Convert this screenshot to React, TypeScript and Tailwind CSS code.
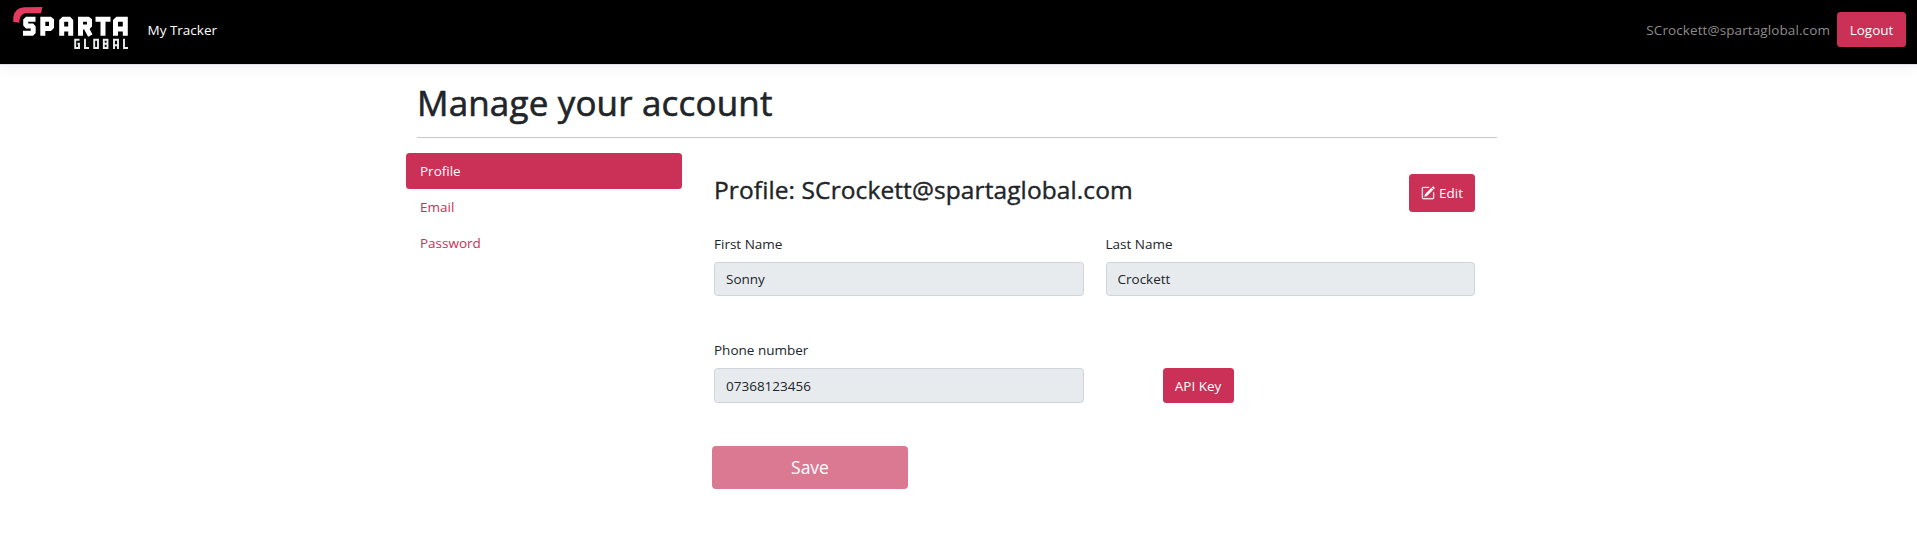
import React from "react";

function Logo() {
  return (
    <svg width="118" height="46" viewBox="12 6 118 46" className="block shrink-0" fill="none" aria-label="Sparta Global">
      <path d="M13.300 22V17Q14 8.500 24 7.200L42.500 7L41 13.200H25.500Q19.500 14 19.300 22.700Z" fill="#e5395f" />
      <g stroke="#fff" strokeWidth="5" strokeLinejoin="miter">
        <path d="M35.500 19.200H27L25.700 20.500V24.500L27 26H32L33.200 27.500V31.900L32 33.200H23" />
        <path d="M42.800 35.700V19.200H50L51.500 20.500V27L50 28.400H43" />
        <path d="M61.700 35.700V21L63.500 19.200H69L70.700 21V35.700M62 29H71" />
        <path d="M80.500 35.700V19.200H88L89.500 20.500V25.500L88 27H81M86 27.500L90.300 35.700" />
        <path d="M95.500 19.200H110.500M103 19V35.700" />
        <path d="M115.500 35.700V21L117.300 19.200H125.300V35.700M115.500 29H125" />
      </g>
      <g stroke="#e8eeee" strokeWidth="1.900">
        <path d="M79.500 39.800H75.200V48H79V43.800H77.500" />
        <path d="M85 38.700V48H89" />
        <path d="M94.200 39.800H98V48H94.200Z" />
        <path d="M103.800 39.800H107.500V48H103.800ZM103.800 43.700H108" />
        <path d="M114 49V39.800H118V49M114 45.200H118" />
        <path d="M124 38.700V48H128" />
      </g>
    </svg>
  );
}

function Field({ label, value, heightClass }: { label: string; value: string; heightClass: string }) {
  return (
    <div className="min-w-0">
      <label className="block h-[21px] leading-[21px]">{label}</label>
      <div
        className={
          "mt-[7px] flex items-center rounded-[3.5px] border border-[#ced4da] bg-[#e7ebee] px-[11px] pt-px " + heightClass
        }
      >
        {value}
      </div>
    </div>
  );
}

const navItems = ["Profile", "Email", "Password"];

export default function App() {
  return (
    <div className="h-[542px] w-full overflow-hidden bg-white font-['Open_Sans','Noto_Sans',sans-serif] text-[13.5px] text-[#212529]">
      <header className="flex h-[65px] items-start border-b border-[#dee2e6] bg-black pr-[11px] pl-3 text-white shadow-[0_4px_12px_rgba(0,0,0,0.05)]">
        <div className="pt-1.5">
          <Logo />
        </div>
        <nav className="flex h-[59px] flex-1 items-center justify-between pl-[17.5px]">
          <span className="pt-0.5">My Tracker</span>
          <div className="flex items-center">
            <span className="pt-0.5 tracking-[0.1px] text-[#8c8c8c]">SCrockett@spartaglobal.com</span>
            <button className="ml-[7px] h-[35px] w-[69px] rounded-[3.5px] bg-[#cb3057] pt-px text-white">Logout</button>
          </div>
        </nav>
      </header>

      <main className="ml-[417px] w-[1080px]">
        <h1 className="pt-[17px] text-[35px] leading-[42px] font-medium tracking-[0.16px] [-webkit-text-stroke:0.6px_#212529]">
          Manage your account
        </h1>
        <div className="mt-[13px] h-px bg-[#c7c8c9]" />

        <div className="mt-[15px] flex">
          <ul className="-ml-[11px] w-[276px]">
            {navItems.map((item, i) => (
              <li
                key={item}
                className={
                  i === 0
                    ? "flex h-9 items-center rounded-[3.5px] bg-[#cb3057] px-3.5 text-white"
                    : "flex h-9 items-center px-3.5 text-[#cb3057]"
                }
              >
                {item}
              </li>
            ))}
          </ul>

          <section className="ml-8 w-[761px]">
            <div className="flex items-start justify-between pt-[21px]">
              <h2 className="text-[24.5px] leading-[32px] font-medium tracking-[0.1px] [-webkit-text-stroke:0.4px_#212529]">
                Profile: SCrockett@spartaglobal.com
              </h2>
              <button className="flex h-[38px] w-[66px] items-center justify-center gap-1 rounded-[3.5px] bg-[#cb3057] text-white">
                <svg width="14" height="14" viewBox="0 0 16 16" fill="currentColor" stroke="currentColor" strokeWidth="0.3">
                  <path d="M15.502 1.94a.5.5 0 0 1 0 .706L14.459 3.69l-2-2L13.502.646a.5.5 0 0 1 .707 0l1.293 1.293zm-1.75 2.456-2-2L4.939 9.210a.5.5 0 0 0-.121.196l-.805 2.414a.25.25 0 0 0 .316.316l2.414-.805a.5.5 0 0 0 .196-.120l6.813-6.814z" />
                  <path
                    fillRule="evenodd"
                    d="M1 13.500A1.500 1.500 0 0 0 2.500 15h11a1.500 1.500 0 0 0 1.500-1.500v-6a.5.5 0 0 0-1 0v6a.5.5 0 0 1-.5.5h-11a.5.5 0 0 1-.5-.5v-11a.5.5 0 0 1 .5-.5H9a.5.5 0 0 0 0-1H2.500A1.500 1.500 0 0 0 1 2.500v11z"
                  />
                </svg>
                <span>Edit</span>
              </button>
            </div>

            <div className="mt-[22px] grid grid-cols-2 gap-[22px]">
              <Field label="First Name" value="Sonny" heightClass="h-[34px]" />
              <Field label="Last Name" value="Crockett" heightClass="h-[34px]" />
            </div>

            <div className="mt-[44px] grid grid-cols-2 items-end gap-[22px]">
              <Field label="Phone number" value="07368123456" heightClass="h-[35px]" />
              <div className="pl-[57px]">
                <button className="block h-[35px] w-[71px] rounded-[3.5px] bg-[#cb3057] pt-px text-white">API Key</button>
              </div>
            </div>

            <button
              disabled
              className="mt-[43px] -ml-0.5 block h-[43px] w-[196px] rounded-[4px] bg-[#dc7992] text-[17.5px] text-white"
            >
              Save
            </button>
          </section>
        </div>
      </main>
    </div>
  );
}
